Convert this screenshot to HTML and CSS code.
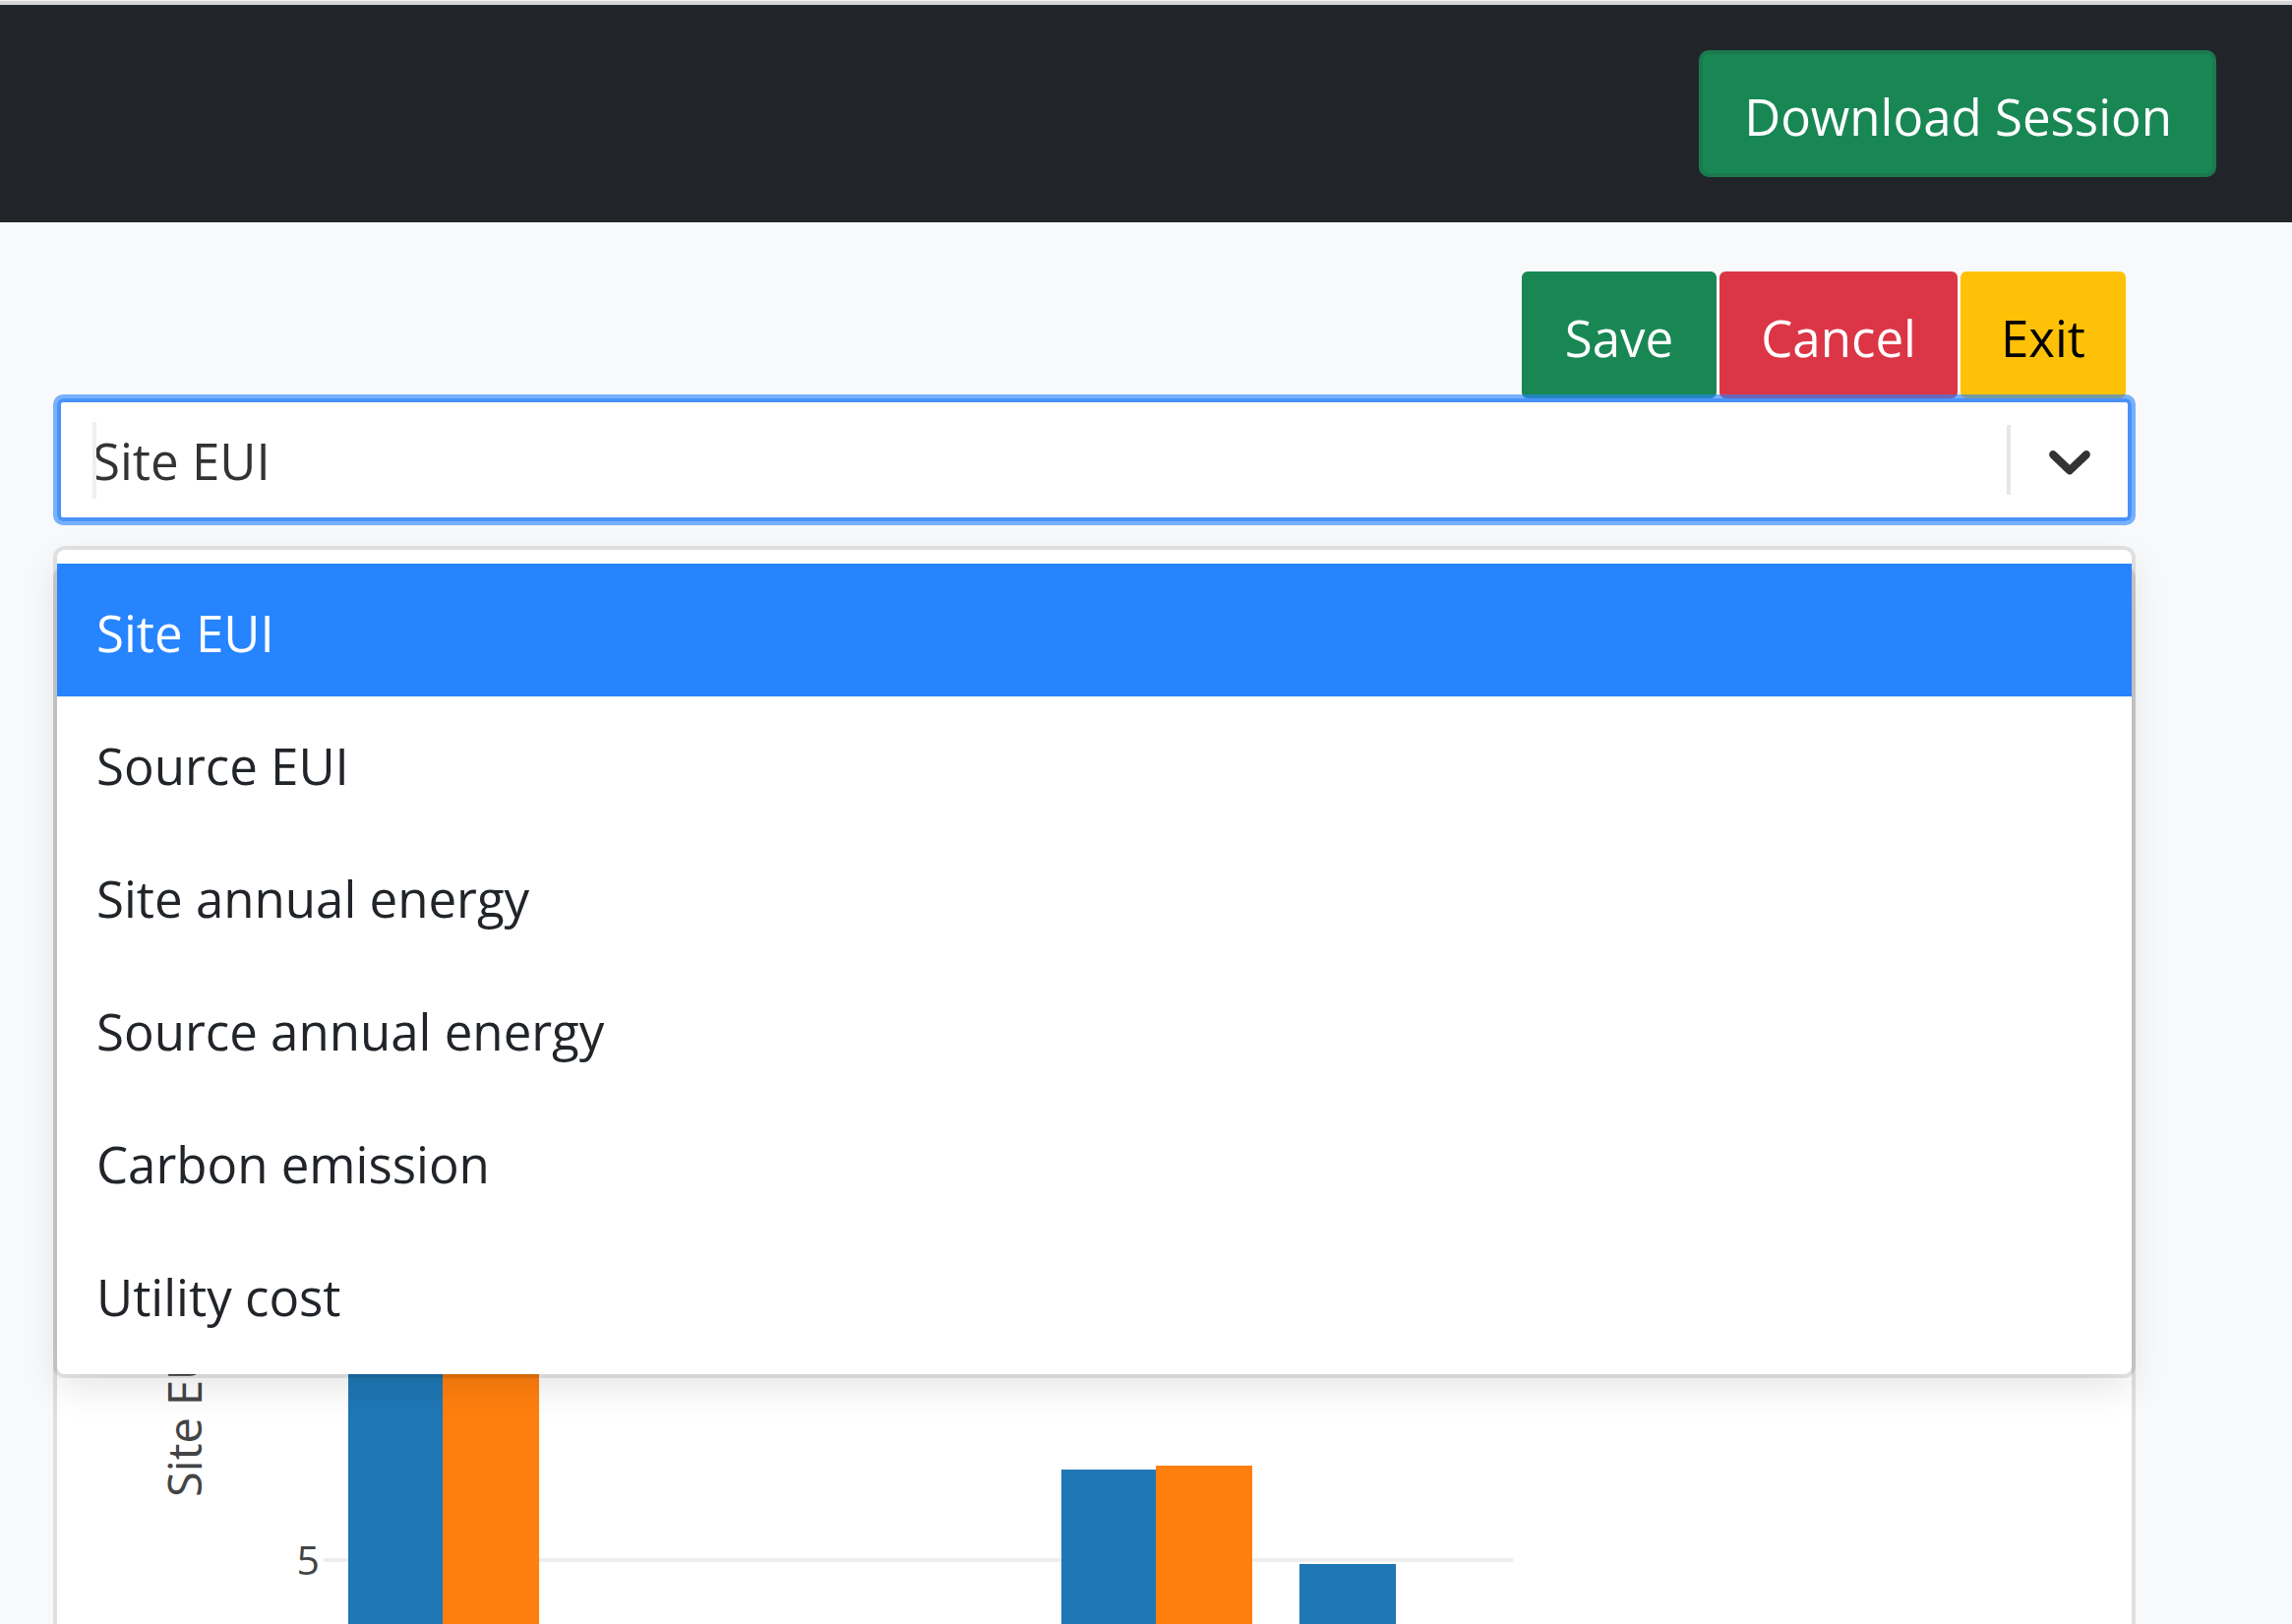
FILE: index.html
```html
<!DOCTYPE html>
<html lang="en">
<head>
<meta charset="utf-8">
<title>Benchmark</title>
<link rel="stylesheet" href="styles.css">
</head>
<body>
<div class="topline"></div>
<nav class="navbar">
  <button class="btn btn-download">Download Session</button>
</nav>
<main class="main">
  <div class="actions">
    <button class="btn btn-save">Save</button>
    <button class="btn btn-cancel">Cancel</button>
    <button class="btn btn-exit">Exit</button>
  </div>
  <div class="select">
    <div class="control">
      <div class="value"><span class="caret"></span>Site EUI</div>
      <span class="sep"></span>
      <span class="indicator">
        <svg width="72" height="72" viewBox="0 0 20 20" aria-hidden="true"><path d="M4.516 7.548c0.436-0.446 1.043-0.481 1.576 0l3.908 3.747 3.908-3.747c0.533-0.481 1.141-0.446 1.574 0 0.436 0.445 0.408 1.197 0 1.615-0.406 0.418-4.695 4.502-4.695 4.502-0.217 0.223-0.502 0.335-0.787 0.335s-0.57-0.112-0.789-0.335c0 0-4.287-4.084-4.695-4.502s-0.436-1.170 0-1.615z"/></svg>
      </span>
    </div>
    <div class="menu">
      <div class="option selected">Site EUI</div>
      <div class="option">Source EUI</div>
      <div class="option">Site annual energy</div>
      <div class="option">Source annual energy</div>
      <div class="option">Carbon emission</div>
      <div class="option">Utility cost</div>
    </div>
  </div>
  <section class="card">
    <svg class="chart" width="2109" height="1092" viewBox="58 578 2109 1092">
      <line class="grid" x1="329" y1="1586" x2="1538" y2="1586"/>
      <rect class="bar-a" x="354" y="1100" width="96" height="600"/>
      <rect class="bar-b" x="450" y="1100" width="98" height="600"/>
      <rect class="bar-a" x="1079" y="1494" width="96" height="200"/>
      <rect class="bar-b" x="1175" y="1490" width="98" height="200"/>
      <rect class="bar-a" x="1321" y="1590" width="98" height="120"/>
      <text class="tick" x="325" y="1601">5</text>
      <text class="ytitle" x="205" y="1522" transform="rotate(-90 205 1522)">Site EUI</text>
    </svg>
  </section>
</main>
</body>
</html>
```

FILE: styles.css
```css
html, body {
  margin: 0;
  height: 1651px;
  overflow: hidden;
}

body {
  background: #f8f9fa;
  font-family: "Open Sans", "Noto Sans", sans-serif;
  color: #212529;
}

.topline {
  height: 4px;
  border-top: 1px solid #f1f1f2;
  background: #d5d5d8;
}

.navbar {
  box-sizing: border-box;
  height: 221px;
  background: #212529;
  display: flex;
  align-items: center;
  justify-content: flex-end;
  padding-right: 77px;
}

.btn {
  font-family: inherit;
  font-size: 51px;
  line-height: 76px;
  padding: 25px 40px 20px;
  border: 4px solid transparent;
  border-radius: 6px;
  margin: 0;
  cursor: pointer;
}

.btn-download {
  background: #198754;
  border-color: #1a7a4e;
  color: #fff;
  border-radius: 10px;
  padding-left: 42px;
  padding-right: 41px;
}

.main {
  padding: 50px 159px 0 54px;
}

.actions {
  display: flex;
  justify-content: flex-end;
  gap: 3px;
  padding-right: 10px;
}

.btn-save {
  background: #198754;
  border-color: #198754;
  color: #fff;
}

.btn-cancel {
  background: #dc3545;
  border-color: #dc3545;
  color: #fff;
  padding-left: 38px;
  padding-right: 38px;
}

.btn-exit {
  background: #ffc107;
  border-color: #ffc107;
  color: #000;
  padding-left: 37px;
  padding-right: 37px;
}

.select {
  position: relative;
  margin-top: -4px;
  z-index: 2;
}

.control {
  box-sizing: border-box;
  height: 133px;
  display: flex;
  align-items: center;
  background: #fff;
  background-clip: padding-box;
  border: 4px solid rgba(38, 132, 255, 0.62);
  box-shadow: inset 0 0 0 4px #4a92f8;
  border-radius: 10px;
}

.value {
  position: relative;
  flex: 1;
  padding-left: 36px;
  font-size: 51px;
  color: #333;
}

.caret {
  position: absolute;
  left: 36px;
  top: -4px;
  width: 4px;
  height: 78px;
  background: #efefef;
}

.sep {
  width: 4px;
  height: 71px;
  background: #e6e6e6;
}

.indicator {
  display: flex;
  padding: 0 27px 0 24px;
  fill: #333;
}

.menu {
  position: absolute;
  top: calc(100% + 25px);
  left: 4px;
  right: 4px;
  padding: 14px 0;
  background: #fff;
  border-radius: 8px;
  box-shadow: 0 0 0 4px rgba(0, 0, 0, 0.09), 0 14px 37px rgba(0, 0, 0, 0.1);
}

.option {
  box-sizing: border-box;
  height: 135px;
  display: flex;
  align-items: center;
  padding: 5px 0 0 40px;
  font-size: 51px;
  color: #212529;
}

.option.selected {
  background: #2684ff;
  color: #fff;
}

.card {
  margin-top: 40px;
  height: 1100px;
  background: #fff;
  border: 4px solid #dfdfdf;
  border-radius: 14px;
  overflow: hidden;
}

.chart {
  display: block;
}

.grid {
  stroke: #eeeeee;
  stroke-width: 4;
}

.bar-a {
  fill: #1f77b4;
}

.bar-b {
  fill: #ff7f0e;
}

.tick {
  font-family: "Open Sans", sans-serif;
  font-size: 41px;
  fill: #444;
  text-anchor: end;
}

.ytitle {
  font-family: "Open Sans", sans-serif;
  font-size: 47px;
  fill: #444;
}
```
